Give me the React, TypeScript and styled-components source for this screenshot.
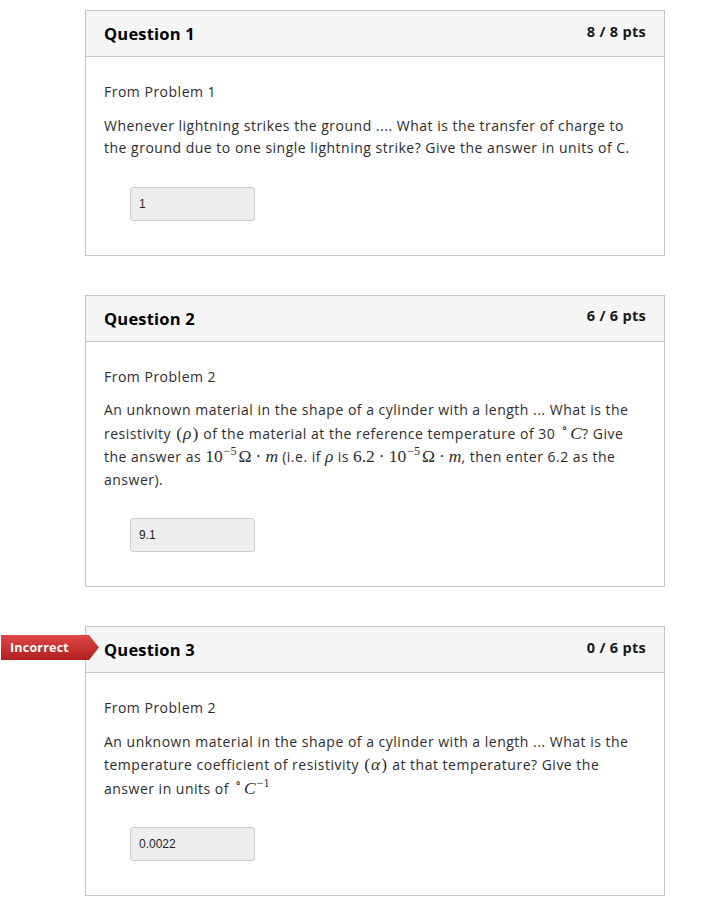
import React from 'react'
import styled, { createGlobalStyle } from 'styled-components'

const GlobalStyle = createGlobalStyle`
  body {
    margin: 0;
    background: #ffffff;
    font-family: "Open Sans", "Noto Sans", sans-serif;
    color: #2d2d2d;
  }
`

interface IQuestion {
  title: string
  points: string
  source: string
  body: React.ReactNode
  answer: string
  incorrect?: boolean
}

// inline math, roughly the way KaTeX sets it
const M = styled.span`
  font-family: "Liberation Serif", "DejaVu Serif", serif;
  font-size: 17.5px;
  letter-spacing: 0;
`

const Mi = styled(M)`
  font-style: italic;
`

const Paren = styled(M)`
  margin: 0 1px;
`

const Op = styled(M)`
  margin: 0 4px;
`

const Sup = styled.sup`
  font-family: "Liberation Serif", "DejaVu Serif", serif;
  font-size: 12px;
  letter-spacing: 0;
  line-height: 0;
  vertical-align: 7px;
  margin: 0 2px 0 1px;
`

const Deg = styled(Sup)`
  margin: 0 3px 0 2px;
`

const questions: IQuestion[] = [
  {
    title: 'Question 1',
    points: '8 / 8 pts',
    source: 'From Problem 1',
    body: (
      <>
        Whenever lightning strikes the ground .... What is the transfer of
        charge to the ground due to one single lightning strike? Give the answer
        in units of C.
      </>
    ),
    answer: '1'
  },
  {
    title: 'Question 2',
    points: '6 / 6 pts',
    source: 'From Problem 2',
    body: (
      <>
        An unknown material in the shape of a cylinder with a length ... What
        is the resistivity <Paren>(</Paren>
        <Mi>ρ</Mi>
        <Paren>)</Paren> of the material at the reference temperature of 30{' '}
        <Deg>∘</Deg>
        <Mi>C</Mi>? Give the answer as <M>10</M>
        <Sup>−5</Sup>
        <M>Ω</M>
        <Op>·</Op>
        <Mi>m</Mi> (i.e. if <Mi>ρ</Mi> is <M>6.2</M>
        <Op>·</Op>
        <M>10</M>
        <Sup>−5</Sup>
        <M>Ω</M>
        <Op>·</Op>
        <Mi>m</Mi>, then enter 6.2 as the answer).
      </>
    ),
    answer: '9.1'
  },
  {
    title: 'Question 3',
    points: '0 / 6 pts',
    source: 'From Problem 2',
    body: (
      <>
        An unknown material in the shape of a cylinder with a length ... What
        is the temperature coefficient of resistivity <Paren>(</Paren>
        <Mi>α</Mi>
        <Paren>)</Paren> at that temperature? Give the answer in units of{' '}
        <Deg>∘</Deg>
        <Mi>C</Mi>
        <Sup>−1</Sup>
      </>
    ),
    answer: '0.0022',
    incorrect: true
  }
]

export default function App() {
  return (
    <Page>
      <GlobalStyle />
      {questions.map(q => (
        <Card key={q.title}>
          {q.incorrect && <Badge>Incorrect</Badge>}
          <Header>
            <Title>{q.title}</Title>
            <Points>{q.points}</Points>
          </Header>
          <Body>
            <Text>{q.source}</Text>
            <Text>{q.body}</Text>
            <AnswerBox value={q.answer} readOnly />
          </Body>
        </Card>
      ))}
    </Page>
  )
}

const Page = styled.div`
  display: flex;
  flex-direction: column;
  gap: 39px;
  padding: 10px 0 0 85px;
`

const Card = styled.div`
  position: relative;
  width: 580px;
  box-sizing: border-box;
  border: 1px solid #c4c4c4;
  background: #ffffff;
`

const Header = styled.div`
  display: flex;
  align-items: center;
  justify-content: space-between;
  height: 45px;
  padding: 0 18px;
  border-bottom: 1px solid #c4c4c4;
  background: #f5f5f5;
`

const Title = styled.h2`
  margin: 0;
  font-size: 16.5px;
  font-weight: 700;
  letter-spacing: 0.2px;
  color: #000000;
`

const Points = styled.div`
  margin-bottom: 5px;
  font-size: 14.5px;
  font-weight: 700;
  letter-spacing: 0.3px;
  color: #1a1a1a;
`

const Body = styled.div`
  display: flex;
  flex-direction: column;
  align-items: flex-start;
  padding: 24px 18px 34px;
`

const Text = styled.p`
  margin: 0 0 11px;
  font-size: 14px;
  line-height: 22.5px;
  letter-spacing: 0.5px;
  color: #2d2d2d;
`

const AnswerBox = styled.input`
  box-sizing: border-box;
  width: 125px;
  height: 34px;
  margin: 16px 0 0 26px;
  padding: 0 8px;
  border: 1px solid #cccccc;
  border-radius: 3px;
  background: #eeeeee;
  font-family: "Liberation Sans", Arial, sans-serif;
  font-size: 12px;
  color: #1e1e1e;
  outline: none;
`

const Badge = styled.div`
  position: absolute;
  top: 8px;
  left: -85px;
  width: 98px;
  height: 25px;
  box-sizing: border-box;
  padding: 0 0 1px 9px;
  display: flex;
  align-items: center;
  clip-path: polygon(0 0, 88px 0, 98px 50%, 88px 100%, 0 100%);
  background: linear-gradient(#e04646, #b01f1f);
  color: #ffffff;
  font-size: 12.5px;
  font-weight: 700;
  letter-spacing: 0.2px;
`
